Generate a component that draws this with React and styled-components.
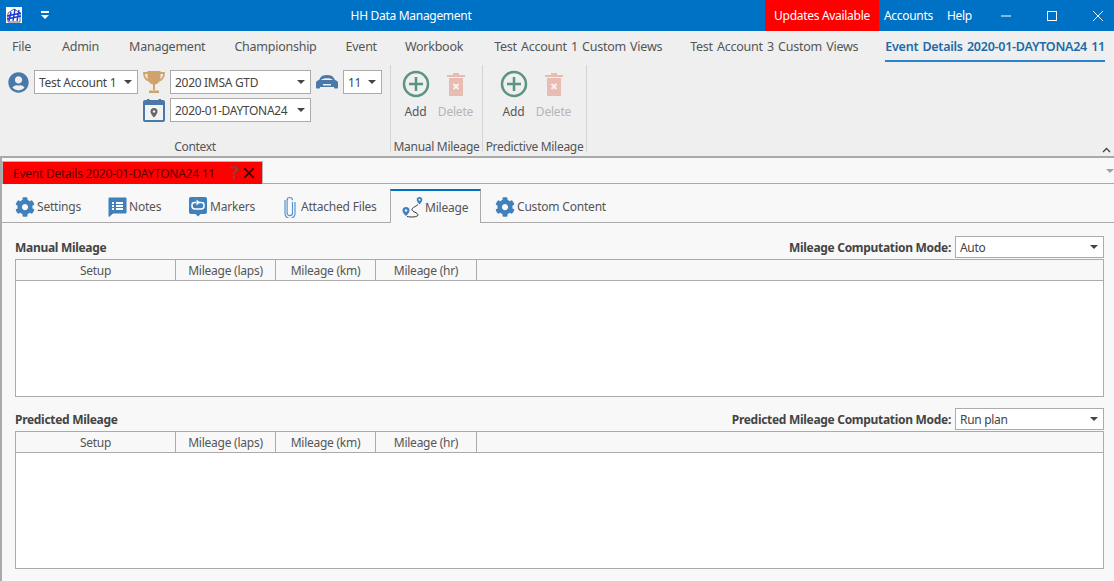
import React from 'react';
import styled, { createGlobalStyle } from 'styled-components';
import { FaCog, FaUserCircle } from 'react-icons/fa';

const GlobalStyle = createGlobalStyle`
  html, body { margin: 0; padding: 0; background: #f8f8f8; }
  body { font-family: "Noto Sans", "Open Sans", sans-serif; font-size: 12px; color: #444; overflow: hidden; }
  * { box-sizing: border-box; }
`;

const Page = styled.div`
  width: 1114px;
  height: 581px;
  display: flex;
  flex-direction: column;
  overflow: hidden;
`;

// --- title bar ---
const TitleBar = styled.div`
  height: 31px;
  flex: none;
  background: #0072c6;
  display: flex;
  align-items: stretch;
  color: #fff;
  letter-spacing: -0.3px;
`;
const Logo = styled.div`
  width: 16px;
  height: 16px;
  margin: 7px 0 0 6px;
  background: #fff;
`;
const QuickCaret = styled.div`
  margin: 11px 0 0 19px;
  width: 8px;
  height: 8px;
  border-top: 2px solid #fff;
  position: relative;
  &::after {
    content: '';
    position: absolute;
    left: 0;
    top: 2px;
    border-left: 4px solid transparent;
    border-right: 4px solid transparent;
    border-top: 4px solid #fff;
  }
`;
const AppTitle = styled.div`
  width: 716px;
  padding-left: 8px;
  text-align: center;
  line-height: 31px;
`;
const Updates = styled.div`
  width: 114px;
  background: #ff0000;
  text-align: center;
  line-height: 31px;
`;
const TitleLink = styled.div`
  line-height: 31px;
  margin-left: ${(p) => p.$gap}px;
`;
const WindowControls = styled.div`
  margin-left: auto;
  margin-right: -7px;
  display: flex;
`;
const WindowButton = styled.div`
  width: 46px;
  display: flex;
  align-items: center;
  justify-content: center;
`;

// --- menu ---
const MenuBar = styled.div`
  height: 34px;
  flex: none;
  background: #efefef;
  display: flex;
  padding-left: 12px;
`;
const MenuItem = styled.div`
  margin-right: ${(p) => p.$gap}px;
  height: 31px;
  line-height: 32px;
  font-size: 12.5px;
  letter-spacing: -0.25px;
  word-spacing: 1.2px;
  color: ${(p) => (p.$active ? '#1e6aa8' : '#555')};
  font-weight: ${(p) => (p.$active ? 600 : 400)};
  border-bottom: ${(p) => (p.$active ? '2px solid #2b82cc' : 'none')};
`;

// --- ribbon ---
const Ribbon = styled.div`
  height: 93px;
  flex: none;
  background: #efefef;
  border-bottom: 2px solid #aaa;
  display: flex;
  position: relative;
`;
const Group = styled.div`
  width: ${(p) => p.$w}px;
  height: 87px;
  border-right: 1px solid #d4d4d4;
  display: flex;
  flex-direction: column;
  justify-content: space-between;
`;
const GroupLabel = styled.div`
  margin-bottom: -3px;
  text-align: center;
  font-size: 12px;
  line-height: 16px;
  letter-spacing: -0.3px;
  color: #555;
  white-space: nowrap;
`;
const ContextGrid = styled.div`
  display: grid;
  grid-template-columns: 26px 104px 32px 141px 32px 39px;
  grid-template-rows: 24px 24px;
  row-gap: 4px;
  padding: 5px 0 0 8px;
  align-items: center;
  justify-items: center;
`;
const AccountIcon = styled(FaUserCircle)`
  justify-self: start;
  color: #4a78a8;
`;
const Select = styled.div`
  height: ${(p) => p.$h || 24}px;
  width: ${(p) => (p.$w ? `${p.$w}px` : '100%')};
  background: #fff;
  border: 1px solid #ababab;
  display: flex;
  align-items: center;
  justify-content: space-between;
  padding: 0 5px 0 4px;
  font-size: 12px;
  letter-spacing: -0.3px;
  color: #444;
  white-space: nowrap;
  &::after {
    content: '';
    flex: none;
    border-left: 4px solid transparent;
    border-right: 4px solid transparent;
    border-top: 4px solid #444;
  }
`;
const ActionRow = styled.div`
  display: flex;
  padding: 4px 0 0 ${(p) => p.$pad}px;
`;
const Action = styled.div`
  width: ${(p) => p.$w}px;
  display: flex;
  flex-direction: column;
  align-items: center;
  font-size: 12px;
  letter-spacing: -0.2px;
  color: ${(p) => (p.$off ? '#b5b5b5' : '#555')};
`;
const ActionIcon = styled.div`
  height: 30px;
  display: flex;
  align-items: center;
  margin-bottom: 4px;
`;
const Collapse = styled.div`
  position: absolute;
  right: 3px;
  bottom: 3px;
  line-height: 0;
`;

// --- doc tab strip ---
const Workspace = styled.div`
  flex: 1;
  border-left: 2px solid #aaa;
  display: flex;
  flex-direction: column;
  min-height: 0;
`;
const DocStrip = styled.div`
  height: 26px;
  flex: none;
  padding-top: 3px;
  border-bottom: 1px solid #aaa;
  position: relative;
`;
const DocTab = styled.div`
  width: 261px;
  height: 23px;
  background: #ff0000;
  border: 1px solid #b5b5b5;
  border-bottom: none;
  display: flex;
  align-items: center;
  padding-left: 10px;
  font-size: 12px;
  letter-spacing: -0.25px;
  color: #5a0000;
  white-space: nowrap;
`;
const DocHelp = styled.span`
  margin-left: 16px;
  font-size: 17px;
  line-height: 20px;
  font-weight: 700;
  color: #a03434;
`;
const DocClose = styled.span`
  margin-left: 5px;
  line-height: 0;
`;
const StripMenu = styled.div`
  position: absolute;
  right: 0;
  top: 11px;
  border-left: 4px solid transparent;
  border-right: 4px solid transparent;
  border-top: 4px solid #a0a0a0;
`;

// --- sub tabs ---
const TabBar = styled.div`
  height: 39px;
  flex: none;
  display: flex;
  align-items: flex-end;
  border-bottom: 1px solid #aaa;
`;
const Tab = styled.div`
  width: ${(p) => p.$w}px;
  height: 34px;
  display: flex;
  align-items: center;
  padding: 3px 0 0 ${(p) => p.$pad}px;
  gap: ${(p) => p.$gap ?? 2}px;
  font-size: 12px;
  letter-spacing: -0.2px;
  color: #555;
  white-space: nowrap;
  ${(p) =>
    p.$active &&
    `
    background: #f8f8f8;
    border-top: 2px solid #0072c6;
    border-left: 1px solid #aaa;
    border-right: 1px solid #aaa;
    margin-bottom: -1px;
    padding-top: 1px;
  `}
`;

// --- content ---
const Content = styled.div`
  flex: 1;
  padding: 13px 10px 0 13px;
`;
const Section = styled.section`
  margin-bottom: 11px;
`;
const SectionHead = styled.div`
  height: 22px;
  display: flex;
  align-items: center;
  justify-content: space-between;
  margin-bottom: 1px;
`;
const SectionTitle = styled.div`
  font-size: 12px;
  font-weight: 700;
  letter-spacing: -0.3px;
  color: #444;
`;
const ModeBox = styled.div`
  display: flex;
  align-items: center;
  gap: 4px;
`;
const Table = styled.div`
  border: 1px solid #ababab;
  height: 138px;
  background: #fff;
  display: flex;
  flex-direction: column;
`;
const TableHead = styled.div`
  height: 21px;
  flex: none;
  background: #f8f8f8;
  border-bottom: 1px solid #ababab;
  display: flex;
`;
const HeadCell = styled.div`
  width: ${(p) => p.$w}px;
  border-right: 1px solid #ababab;
  text-align: center;
  line-height: 22px;
  font-size: 12px;
  letter-spacing: -0.25px;
  color: #555;
`;

// --- drawn icons ---
const LogoIcon = () => (
  <svg width="16" height="16" viewBox="0 0 16 16" fill="none">
    <path d="M2 15V6l6-4 6 4v9z" stroke="#666" strokeWidth="1" />
    <path d="M1 9l14-3M1 12l14-3M3 14l2-9M7 14l2-12M11 14l2-11" stroke="#1a35d8" strokeWidth="1.4" />
  </svg>
);
const TrophyIcon = () => (
  <svg width="22" height="24" viewBox="0 0 22 24">
    <path d="M4.500 1h13v6c0 4-2.500 7.500-6.500 7.500S4.500 11 4.500 7z" fill="#d2a26c" />
    <path d="M5 3H1c0 4.500 2 7 6 8M17 3h4c0 4.500-2 7-6 8" fill="none" stroke="#d2a26c" strokeWidth="1.800" />
    <path d="M10 14h2v6h-2zM6 20.500h10V23H6z" fill="#d2a26c" />
  </svg>
);
const CarIcon = () => (
  <svg width="22" height="15" viewBox="0 0 22 15">
    <path
      d="M0 8c0-1.500 1-2.500 3-3l1.500-2.500C5.500 1 7 0 11 0s5.500 1 6.500 2.500L19 5c2 .5 3 1.500 3 3v4.500c0 .5-.5 1-1 1h-2c-.6 0-1-.5-1-1V12H4v.5c0 .5-.4 1-1 1H1c-.5 0-1-.5-1-1z"
      fill="#4a78a8"
    />
    <path d="M5 5c2-2.500 10-2.500 12 0z" fill="#efefef" />
    <path d="M7 9h8v1.500H7z" fill="#efefef" />
  </svg>
);
const CalendarIcon = () => (
  <svg width="22" height="23" viewBox="0 0 22 23">
    <path d="M4 0h2.500v3H4zM15.500 0H18v3h-2.500z" fill="#4a78a8" />
    <rect x="1" y="2" width="20" height="20" rx="1" fill="#f2f2f2" stroke="#4a78a8" strokeWidth="2" />
    <rect x="1" y="2" width="20" height="4" fill="#4a78a8" />
    <path d="M11 9a3.500 3.500 0 0 1 3.500 3.500c0 2.500-3.500 6-3.500 6s-3.500-3.500-3.500-6A3.500 3.500 0 0 1 11 9z" fill="#666" />
    <circle cx="11" cy="12.500" r="1.200" fill="#f2f2f2" />
  </svg>
);
const AddIcon = () => (
  <svg width="28" height="28" viewBox="0 0 28 28" fill="none" stroke="#5c9483">
    <circle cx="14" cy="14" r="12" strokeWidth="2.500" />
    <path d="M14 7v14M7 14h14" strokeWidth="2.500" />
  </svg>
);
const TrashIcon = () => (
  <svg width="20" height="25" viewBox="0 0 20 25">
    <path d="M1 3h18v2H1zM7 1h6v2H7z" fill="#e8bcb2" />
    <path d="M3 6h14v17c0 .6-.4 1-1 1H4c-.6 0-1-.4-1-1z" fill="#e8bcb2" />
    <path d="M7.500 12l5 5M12.500 12l-5 5" stroke="#f8f0ee" strokeWidth="2" />
  </svg>
);
const NotesIcon = () => (
  <svg width="19" height="20" viewBox="0 0 19 20">
    <path d="M1 1h17v15H5l-4 3.500z" fill="#3f80bd" stroke="#3f80bd" strokeWidth="1" strokeLinejoin="round" />
    <path d="M4 5h2v2H4zM8 5h7v2H8zM4 8h2v2H4zM8 8h7v2H8zM4 11h2v2H4zM8 11h7v2H8z" fill="#fff" />
  </svg>
);
const MarkersIcon = () => (
  <svg width="20" height="21" viewBox="0 0 20 21">
    <path d="M3 1h14c1.200 0 2 .8 2 2v13c0 1.200-.8 2-2 2h-4.500L10 20.500 7.500 18H3c-1.200 0-2-.8-2-2V3c0-1.200.8-2 2-2z" fill="#3f80bd" />
    <path d="M8 6.500H6.500A2.500 2.500 0 0 0 4 9v1a3 3 0 0 0 3 3h6a3 3 0 0 0 3-3V9a2.500 2.500 0 0 0-2.500-2.500H10" fill="none" stroke="#fff" strokeWidth="1.500" />
    <path d="M8.500 3.500l3.500 3-3.500 3z" fill="#fff" />
  </svg>
);
const ClipIcon = () => (
  <svg width="12" height="22" viewBox="0 0 12 22" fill="none">
    <path d="M8.500 6v11a2.700 2.700 0 0 1-5.400 0V4.200a2.700 2.700 0 0 1 5.400 0M11 6v11.500a5 5 0 0 1-10 0V4" stroke="#5b95cc" strokeWidth="1.200" />
  </svg>
);
const RouteIcon = () => (
  <svg width="21" height="22" viewBox="0 0 21 22" fill="none">
    <path d="M5 19.500c4 1 11 .5 11-1.500 0-2.500-6-3-6-5.500 0-2 4-3 6-5" stroke="#333" strokeWidth="1" />
    <path d="M4 10a3.500 3.500 0 0 1 3.500 3.500C7.500 16 4 19 4 19S.5 16 .5 13.500A3.500 3.500 0 0 1 4 10z" fill="#3f80bd" />
    <circle cx="4" cy="13.500" r="1.200" fill="#f8f8f8" />
    <path d="M17.500 0a2.800 2.800 0 0 1 2.800 2.800c0 2-2.800 4.700-2.800 4.700s-2.800-2.700-2.800-4.700A2.800 2.800 0 0 1 17.500 0z" fill="#3f80bd" />
    <circle cx="17.500" cy="2.800" r="1" fill="#f8f8f8" />
  </svg>
);
const Minimize = () => (
  <svg width="10" height="10" viewBox="0 0 10 10"><path d="M0 5h10" stroke="#fff" /></svg>
);
const Maximize = () => (
  <svg width="10" height="10" viewBox="0 0 10 10"><rect x=".5" y=".5" width="9" height="9" fill="none" stroke="#fff" /></svg>
);
const CloseGlyph = ({ size = 10, color = '#fff', w = 1 }) => (
  <svg width={size} height={size} viewBox="0 0 10 10"><path d="M0 0l10 10M10 0L0 10" stroke={color} strokeWidth={w} /></svg>
);

const menus = [
  ['File', 31],
  ['Admin', 30],
  ['Management', 29],
  ['Championship', 29],
  ['Event', 28],
  ['Workbook', 31],
  ['Test Account 1 Custom Views', 28],
  ['Test Account 3 Custom Views', 27],
];

const columns = [
  ['Setup', 160],
  ['Mileage (laps)', 100],
  ['Mileage (km)', 100],
  ['Mileage (hr)', 101],
];

const MileageSection = ({ title, modeLabel, mode }) => (
  <Section>
    <SectionHead>
      <SectionTitle>{title}</SectionTitle>
      <ModeBox>
        <SectionTitle>{modeLabel}</SectionTitle>
        <Select $w={149} $h={22}>{mode}</Select>
      </ModeBox>
    </SectionHead>
    <Table>
      <TableHead>
        {columns.map(([label, w]) => (
          <HeadCell key={label} $w={w}>{label}</HeadCell>
        ))}
      </TableHead>
    </Table>
  </Section>
);

const App = () => (
  <Page>
    <GlobalStyle />
    <TitleBar>
      <Logo><LogoIcon /></Logo>
      <QuickCaret />
      <AppTitle>HH Data Management</AppTitle>
      <Updates>Updates Available</Updates>
      <TitleLink $gap={5}>Accounts</TitleLink>
      <TitleLink $gap={14}>Help</TitleLink>
      <WindowControls>
        <WindowButton><Minimize /></WindowButton>
        <WindowButton><Maximize /></WindowButton>
        <WindowButton><CloseGlyph /></WindowButton>
      </WindowControls>
    </TitleBar>

    <MenuBar>
      {menus.map(([label, gap]) => (
        <MenuItem key={label} $gap={gap}>{label}</MenuItem>
      ))}
      <MenuItem $active $gap={0}>Event Details 2020-01-DAYTONA24 11</MenuItem>
    </MenuBar>

    <Ribbon>
      <Group $w={391}>
        <ContextGrid>
          <AccountIcon size={21} />
          <Select>Test Account 1</Select>
          <TrophyIcon />
          <Select>2020 IMSA GTD</Select>
          <CarIcon />
          <Select>11</Select>
          <span />
          <span />
          <CalendarIcon />
          <Select>2020-01-DAYTONA24</Select>
        </ContextGrid>
        <GroupLabel>Context</GroupLabel>
      </Group>
      <Group $w={92}>
        <ActionRow $pad={5}>
          <Action $w={39}><ActionIcon><AddIcon /></ActionIcon>Add</Action>
          <Action $w={41} $off><ActionIcon><TrashIcon /></ActionIcon>Delete</Action>
        </ActionRow>
        <GroupLabel>Manual Mileage</GroupLabel>
      </Group>
      <Group $w={104}>
        <ActionRow $pad={11}>
          <Action $w={39}><ActionIcon><AddIcon /></ActionIcon>Add</Action>
          <Action $w={41} $off><ActionIcon><TrashIcon /></ActionIcon>Delete</Action>
        </ActionRow>
        <GroupLabel>Predictive Mileage</GroupLabel>
      </Group>
      <Collapse>
        <svg width="9" height="6" viewBox="0 0 9 6" fill="none"><path d="M1 5l3.500-3.500L8 5" stroke="#444" strokeWidth="1.300" /></svg>
      </Collapse>
    </Ribbon>

    <Workspace>
      <DocStrip>
        <DocTab>
          Event Details 2020-01-DAYTONA24 11
          <DocHelp>?</DocHelp>
          <DocClose><CloseGlyph size={10} color="#400000" w={1.800} /></DocClose>
        </DocTab>
        <StripMenu />
      </DocStrip>
      <TabBar>
        <Tab $w={94} $pad={13}><FaCog size={20} color="#3f80bd" />Settings</Tab>
        <Tab $w={80} $pad={12}><NotesIcon />Notes</Tab>
        <Tab $w={96} $pad={12}><MarkersIcon />Markers</Tab>
        <Tab $w={118} $pad={12} $gap={5}><ClipIcon />Attached Files</Tab>
        <Tab $w={91} $pad={11} $active><RouteIcon />Mileage</Tab>
        <Tab $w={130} $pad={14}><FaCog size={20} color="#3f80bd" />Custom Content</Tab>
      </TabBar>
      <Content>
        <MileageSection title="Manual Mileage" modeLabel="Mileage Computation Mode:" mode="Auto" />
        <MileageSection title="Predicted Mileage" modeLabel="Predicted Mileage Computation Mode:" mode="Run plan" />
      </Content>
    </Workspace>
  </Page>
);

export default App;
